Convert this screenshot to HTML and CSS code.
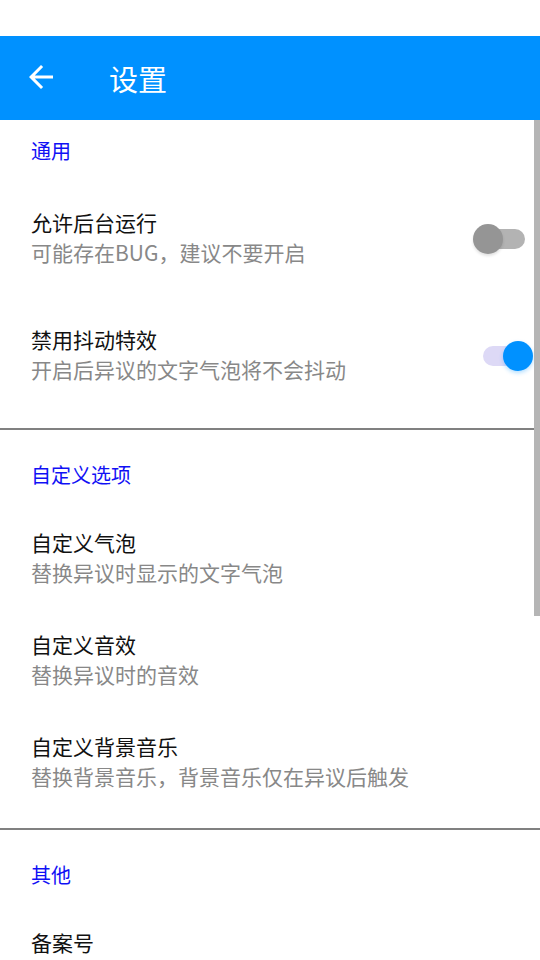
FILE: index.html
```html
<!DOCTYPE html>
<html lang="zh-CN">

<head>
    <meta charset="UTF-8" />
    <meta name="viewport" content="width=device-width, initial-scale=1.0" />
    <title>设置</title>
    <link rel="stylesheet" href="styles.css">
</head>

<body>
    <div class="app">
        <div class="status-bar"></div>

        <!-- Top bar -->
        <header class="top-bar">
            <button class="back-btn" aria-label="返回">
                <svg width="36" height="36" viewBox="0 0 24 24">
                    <path d="M20 11H7.83l5.59-5.59L12 4l-8 8 8 8 1.41-1.41L7.83 13H20v-2z" fill="#fff" />
                </svg>
            </button>
            <h1>设置</h1>
        </header>

        <main class="settings">
            <!-- General -->
            <section class="group group-first">
                <h2 class="group-title">通用</h2>
                <div class="item item-switch">
                    <div class="item-text">
                        <p class="item-title">允许后台运行</p>
                        <p class="item-sub">可能存在BUG，建议不要开启</p>
                    </div>
                    <div class="switch">
                        <span class="track"></span>
                        <span class="thumb"></span>
                    </div>
                </div>
                <div class="item item-switch">
                    <div class="item-text">
                        <p class="item-title">禁用抖动特效</p>
                        <p class="item-sub">开启后异议的文字气泡将不会抖动</p>
                    </div>
                    <div class="switch on">
                        <span class="track"></span>
                        <span class="thumb"></span>
                    </div>
                </div>
            </section>

            <hr class="divider">

            <!-- Custom -->
            <section class="group">
                <h2 class="group-title">自定义选项</h2>
                <div class="item">
                    <div class="item-text">
                        <p class="item-title">自定义气泡</p>
                        <p class="item-sub">替换异议时显示的文字气泡</p>
                    </div>
                </div>
                <div class="item">
                    <div class="item-text">
                        <p class="item-title">自定义音效</p>
                        <p class="item-sub">替换异议时的音效</p>
                    </div>
                </div>
                <div class="item">
                    <div class="item-text">
                        <p class="item-title">自定义背景音乐</p>
                        <p class="item-sub">替换背景音乐，背景音乐仅在异议后触发</p>
                    </div>
                </div>
            </section>

            <hr class="divider">

            <!-- Other -->
            <section class="group">
                <h2 class="group-title">其他</h2>
                <div class="item">
                    <div class="item-text">
                        <p class="item-title">备案号</p>
                    </div>
                </div>
            </section>
        </main>

        <div class="scroll-thumb"></div>
    </div>
</body>

</html>
```

FILE: styles.css
```css
* {
    margin: 0;
    padding: 0;
    box-sizing: border-box;
}

html,
body {
    height: 100%;
    overflow: hidden;
}

body {
    font-family: "Noto Sans CJK SC", "Noto Sans", sans-serif;
    background: #fff;
    color: #111;
}

.app {
    position: relative;
    height: 960px;
    overflow: hidden;
}

.status-bar {
    height: 36px;
    background: #fff;
}

/* Top bar */
.top-bar {
    height: 84px;
    background: #0091ff;
    display: flex;
    align-items: center;
    padding-left: 23px;
}

.back-btn {
    width: 36px;
    height: 36px;
    border: none;
    background: none;
    display: flex;
    margin-top: -2px;
}

.top-bar h1 {
    color: #fff;
    font-size: 29px;
    font-weight: 400;
    margin-left: 50px;
    line-height: 36px;
}

/* Groups */
.group-title {
    color: #1010f5;
    font-size: 20px;
    font-weight: 400;
    line-height: 30px;
    padding: 30px 31px 18px;
}

.group-first .group-title {
    padding: 16px 31px 15px;
}

.item {
    display: flex;
    align-items: center;
    padding: 19px 7px 23px 31px;
}

.item-switch {
    padding: 26px 7px 31px 31px;
}

.item-text {
    flex: 1;
}

.item-title {
    font-size: 21px;
    line-height: 30px;
    color: #111;
}

.item-sub {
    font-size: 21px;
    line-height: 30px;
    color: #888;
}

.divider {
    border: none;
    height: 2px;
    background: #808080;
    margin-top: 14px;
}

.group-first + .divider {
    margin-top: 13px;
}

/* Switch */
.switch {
    position: relative;
    width: 60px;
    height: 30px;
    flex-shrink: 0;
    margin-top: 4px;
}

.switch .track {
    position: absolute;
    left: 8px;
    right: 8px;
    top: 5px;
    height: 20px;
    border-radius: 10px;
    background: #b3b3b3;
}

.switch .thumb {
    position: absolute;
    left: 0;
    top: 0;
    width: 30px;
    height: 30px;
    border-radius: 50%;
    background: #959595;
    box-shadow: 0 2px 3px rgba(0, 0, 0, 0.12);
}

.switch.on .track {
    left: 10px;
    background: #ddd9f6;
}

.switch.on .thumb {
    left: auto;
    right: 0;
    background: #0091ff;
    box-shadow: 0 2px 4px rgba(0, 145, 255, 0.3);
}

/* Scrollbar */
.scroll-thumb {
    position: absolute;
    right: 0;
    top: 120px;
    width: 6px;
    height: 496px;
    background: #b5b5b5;
}
```
